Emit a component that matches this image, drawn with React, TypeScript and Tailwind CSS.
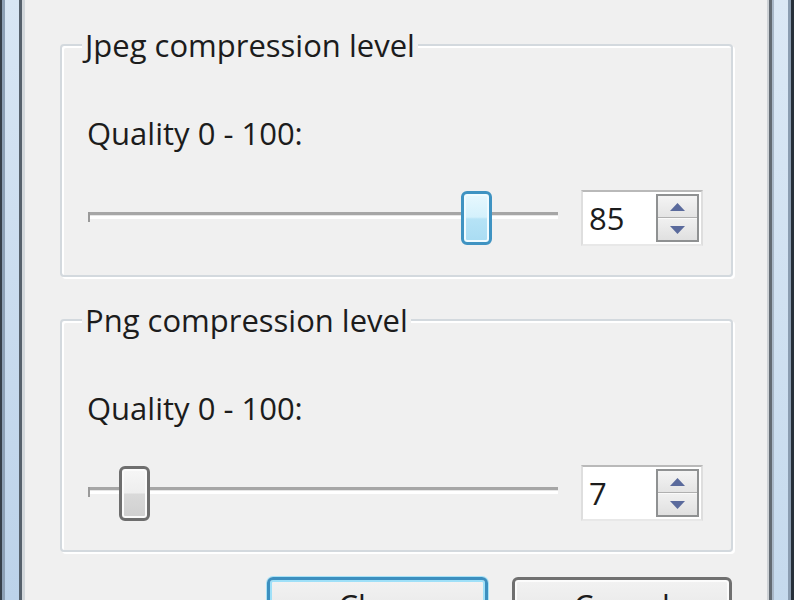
import React from "react";

function Slider({ value, focused }: { value: number; focused?: boolean }) {
  const left = Math.round(value * 4.39);
  return (
    <div className="relative h-[55px] w-[470px] shrink-0 pt-[21px]">
      {/* channel */}
      <div className="h-[7px] w-full border-t-[3px] border-b-[3px] border-t-[#a6a6a6] border-b-white bg-[#e6e6e6]" />
      <div className="absolute left-0 top-[21px] h-[10px] w-[2px] bg-[#9a9a9a]" />
      {/* thumb */}
      <div
        className={
          focused
            ? "absolute top-0 h-[54px] w-[31px] rounded-[6px] border-[3px] border-[#3f93c2] bg-[linear-gradient(to_bottom,#e8f8fe_0%,#d4f1fc_48%,#b6e3f6_52%,#a9dcf3_100%)] shadow-[inset_0_0_0_2px_#f0fbff]"
            : "absolute top-0 h-[55px] w-[31px] rounded-[6px] border-[3px] border-[#6e6e6e] bg-[linear-gradient(to_bottom,#f6f6f6_0%,#eeeeee_48%,#d9d9d9_52%,#d0d0d0_100%)] shadow-[inset_0_0_0_2px_#fbfbfb]"
        }
        style={{ left }}
      />
    </div>
  );
}

function SpinBox({ value }: { value: string }) {
  return (
    <div className="ml-[23px] flex h-[56px] w-[122px] shrink-0 items-center border-2 border-t-[#b9b9b9] border-x-[#dedede] border-b-[#e8e8e8] bg-white">
      <span className="flex-1 pl-[6px] text-[31px] leading-none">{value}</span>
      <div className="mr-[2px] flex h-[48px] w-[43px] flex-col border-2 border-[#8f9192] bg-[#eaeaea]">
        <div className="flex flex-1 items-center justify-center border-b border-[#b0b0b0] bg-[linear-gradient(to_bottom,#f4f4f4,#e4e4e4)]">
          <svg width="15" height="8" viewBox="0 0 15 8">
            <polygon points="7.5,0 15,8 0,8" fill="#5a6a9c" />
          </svg>
        </div>
        <div className="flex flex-1 items-center justify-center border-t border-[#fafafa] bg-[linear-gradient(to_bottom,#f0f0f0,#e0e0e0)]">
          <svg width="15" height="8" viewBox="0 0 15 8">
            <polygon points="0,0 15,0 7.5,8" fill="#5a6a9c" />
          </svg>
        </div>
      </div>
    </div>
  );
}

function Group({ title, value, focused }: { title: string; value: number; focused?: boolean }) {
  return (
    <fieldset className="rounded-[4px] border-2 border-[#d3d9de] shadow-[2px_2px_0_0_#ffffff,inset_2px_2px_0_0_#ffffff]">
      <legend className="ml-[20px] bg-[#f0f0f0] px-[3px] leading-[36px]">{title}</legend>
      <div className="pl-[25px] pr-[28px] pb-[29px]">
        <div className="mt-[52px] leading-[36px]">Quality 0 - 100:</div>
        <div className="mt-[39px] flex items-start">
          <div className="ml-[1px] pt-px">
            <Slider value={value} focused={focused} />
          </div>
          <SpinBox value={String(value)} />
        </div>
      </div>
    </fieldset>
  );
}

function DialogButton({ label, isDefault }: { label: string; isDefault?: boolean }) {
  return (
    <button
      className={
        isDefault
          ? "h-[56px] w-[221px] rounded-[6px] border-[3px] border-[#3c8fbf] bg-[linear-gradient(to_bottom,#f2f2f2_0%,#ebebeb_50%,#dddddd_50%,#cfcfcf_100%)] shadow-[0_0_0_1px_#a9e3f7,inset_0_0_0_2px_#9fe0f8] text-[31px] leading-none text-[#1c1c1c]"
          : "h-[56px] w-[220px] rounded-[6px] border-[3px] border-[#707070] bg-[linear-gradient(to_bottom,#f2f2f2_0%,#ebebeb_50%,#dddddd_50%,#cfcfcf_100%)] shadow-[inset_0_0_0_2px_#fcfcfc] text-[31px] leading-none text-[#1c1c1c]"
      }
    >
      {label}
    </button>
  );
}

export default function App() {
  return (
    <div className="flex h-[660px] w-[794px] overflow-hidden font-['Open_Sans',sans-serif] text-[31px] text-[#1c1c1c]">
      {/* left window border */}
      <div className="flex w-[25px] shrink-0">
        <div className="w-[2px] bg-[#37404a]" />
        <div className="w-[3px] bg-[#8da0b5]" />
        <div className="w-[14px] bg-[linear-gradient(to_bottom,#d8e6f4,#b9d0e8)]" />
        <div className="w-[3px] bg-[#56616c]" />
        <div className="w-[3px] bg-[#d2d7db]" />
      </div>

      <div className="w-[742px] shrink-0 bg-[#f0f0f0] pl-[35px] pr-[34px] pt-[27px]">
        <Group title="Jpeg compression level" value={85} focused />
        <div className="mt-[25px]">
          <Group title="Png compression level" value={7} />
        </div>
        <div className="mt-[25px] flex justify-end gap-[24px] pr-px">
          <DialogButton label="Close" isDefault />
          <DialogButton label="Cancel" />
        </div>
      </div>

      {/* right window border */}
      <div className="flex w-[27px] shrink-0">
        <div className="w-[2px] bg-[#cdd1d5]" />
        <div className="w-[3px] bg-[#636b73]" />
        <div className="w-[2px] bg-[#a9b8c8]" />
        <div className="w-[14px] bg-[linear-gradient(to_bottom,#dbe8f5,#c3d8ec)]" />
        <div className="w-[3px] bg-[#8b9db1]" />
        <div className="w-[3px] bg-[#26303a]" />
      </div>
    </div>
  );
}
